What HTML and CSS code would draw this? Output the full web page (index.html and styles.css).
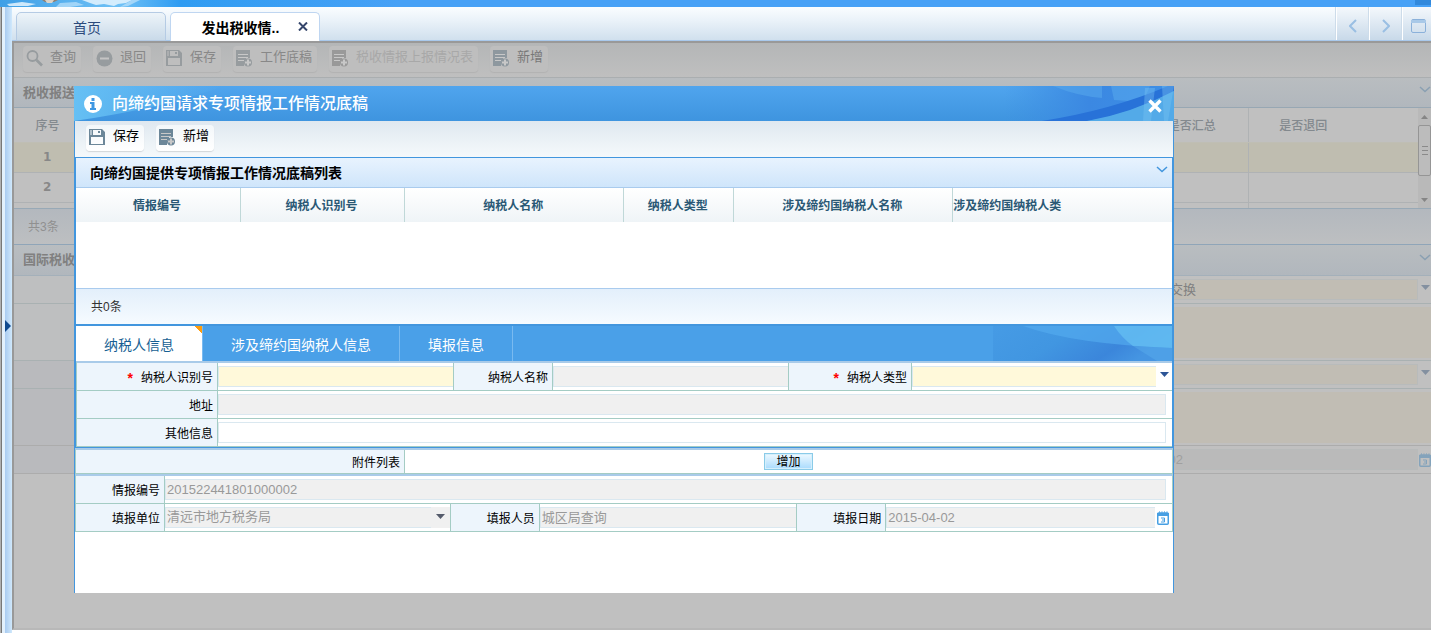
FILE: index.html
```html
<!DOCTYPE html>
<html lang="zh-CN">
<head>
<meta charset="utf-8">
<title>发出税收情报</title>
<link rel="stylesheet" href="styles.css">
</head>
<body>
<svg class="defs" aria-hidden="true">
  <symbol id="i-save" viewBox="0 0 17 17"><path fill="currentColor" fill-rule="evenodd" d="M0 0h13l3 3v13H0zM4 1v5h8V1zM2 8v7h12V8zM1 1v5h2V1z"/><path fill="currentColor" d="M9 2h2v2H9z"/><path fill="currentColor" opacity=".5" d="M1 1h2v5H1z"/></symbol>
  <symbol id="i-add" viewBox="0 0 17 17"><path fill="currentColor" d="M0 0h14v8h-4v3H8v5H0z"/><path class="lines" d="M2 4.500h10M2 7.500h10M2 10.500h6" stroke-width="1"/><circle cx="12" cy="12.500" r="4" fill="currentColor"/><path class="lines" d="M12 9.500v6M9 12.500h6" stroke-width="2"/></symbol>
  <symbol id="i-find" viewBox="0 0 17 17"><circle cx="6.500" cy="6" r="5" fill="none" stroke="currentColor" stroke-width="1.800"/><path d="M10.500 10l5.500 5.500" stroke="currentColor" stroke-width="2.600"/></symbol>
  <symbol id="i-back" viewBox="0 0 17 17"><circle cx="8.500" cy="8.500" r="8" fill="currentColor"/><path d="M4 8.500h9" stroke="#c4c4c4" stroke-width="2"/></symbol>
  <symbol id="i-down" viewBox="0 0 12 7"><path d="M1 1l5 4.500L11 1" fill="none" stroke="currentColor" stroke-width="1.500"/></symbol>
  <symbol id="i-tri" viewBox="0 0 9 5"><path d="M0 0h9L4.500 5z" fill="currentColor"/></symbol>
  <symbol id="i-cal" viewBox="0 0 12 14"><rect x=".75" y="2" width="10.500" height="11.250" rx="1" fill="none" stroke="currentColor" stroke-width="1.500"/><path d="M0 2h12v3H0z" fill="currentColor"/><path d="M2.500 0v3M5 0v3M7.500 0v3M10 0v3" stroke="currentColor" opacity=".6"/><path d="M4 7h3.500v4H4M5 9h2.500" fill="none" stroke="currentColor"/></symbol>
</svg>
<div class="page">
  <header class="banner">
    <svg width="400" height="7" viewBox="0 0 400 7" aria-hidden="true">
      <defs><linearGradient id="g0"><stop offset="0" stop-color="#3f9fe6"/><stop offset=".3" stop-color="#6fc1f6"/><stop offset=".45" stop-color="#2f9cf2"/><stop offset="1" stop-color="#47a1f6"/></linearGradient></defs>
      <path fill="url(#g0)" d="M0 0h400v7H0z"/>
      <path fill="#e6f5fe" opacity=".85" d="M82 0h50l-6 3-8 1-4 2-10-2-8 1-6-2zM7 4l15-2 14 2-8 2H9z"/>
      <path fill="#bfe3fb" opacity=".7" d="M60 3l16-1 8 3-14 2H56zM132 0h8l-12 6-8 1z"/>
      <path fill="#8f7f72" d="M42 0h16l-4 2h-9z"/><path fill="#d9d2c8" d="M45 0h9l-2 3h-5z"/>
    </svg>
    <i class="corner"></i>
  </header>
  <div class="shell">
    <aside class="rail"><button class="expand" aria-label="展开菜单"><svg width="6" height="12" viewBox="0 0 6 12"><path d="M0 0l6 6-6 6z" fill="#104a8f"/></svg></button></aside>
    <main class="main">
      <nav class="tabs">
        <button class="tab">首页</button>
        <div class="tab on"><button class="name">发出税收情..</button><button class="x" aria-label="关闭标签"><svg width="10" height="9" viewBox="0 0 10 9"><path d="M1 .5l8 8M9 .5l-8 8" stroke="#35466b" stroke-width="2"/></svg></button></div>
        <div class="ctrl">
          <button aria-label="上一个"><svg width="8" height="14" viewBox="0 0 8 14"><path d="M7 1L1 7l6 6" fill="none" stroke="#9abfe3" stroke-width="2"/></svg></button>
          <button aria-label="下一个"><svg width="8" height="14" viewBox="0 0 8 14"><path d="M1 1l6 6-6 6" fill="none" stroke="#9abfe3" stroke-width="2"/></svg></button>
          <button aria-label="最大化"><svg width="15" height="14" viewBox="0 0 15 14"><rect x=".5" y=".5" width="14" height="13" rx="1.500" fill="none" stroke="#8bb1da"/><path d="M0 1h15v3H0z" fill="#a9c9e8"/></svg></button>
        </div>
      </nav>
      <section class="work">
        <div class="toolbar">
          <button class="btn"><svg><use href="#i-find"/></svg>查询</button>
          <button class="btn"><svg><use href="#i-back"/></svg>退回</button>
          <button class="btn"><svg><use href="#i-save"/></svg>保存</button>
          <button class="btn"><svg><use href="#i-add"/></svg>工作底稿</button>
          <button class="btn off" disabled><svg><use href="#i-add"/></svg>税收情报上报情况表</button>
          <button class="btn dark"><svg><use href="#i-add"/></svg>新增</button>
        </div>
        <h2 class="bar">税收报送<svg class="chev"><use href="#i-down"/></svg></h2>
        <div class="list">
          <table class="rows">
            <colgroup><col class="c-no"><col><col class="c-sum"><col class="c-ret"></colgroup>
            <thead><tr><th>序号</th><th></th><th>是否汇总</th><th class="ret">是否退回</th></tr></thead>
            <tbody>
              <tr class="sel"><td>1</td><td></td><td></td><td></td></tr>
              <tr><td>2</td><td></td><td></td><td></td></tr>
              <tr class="cut"><td></td><td></td><td></td><td></td></tr>
            </tbody>
          </table>
          <div class="scroll"><svg width="7" height="4"><path d="M0 4l3.500-4L7 4z" fill="#858585"/></svg><span class="thumb"></span><svg width="7" height="4"><path d="M0 0l3.500 4L7 0z" fill="#858585"/></svg></div>
        </div>
        <div class="count">共3条</div>
        <h2 class="bar second">国际税收<svg class="chev"><use href="#i-down"/></svg></h2>
        <div class="bform">
          <div class="brow"><span class="bl"></span><input aria-label="交换类型" value="情报交换" readonly><svg class="tri"><use href="#i-tri"/></svg></div>
          <div class="brow tall"><span class="bl"></span><textarea aria-label="说明"></textarea></div>
          <div class="brow"><span class="bl shade"></span><input aria-label="类型"><svg class="tri"><use href="#i-tri"/></svg></div>
          <div class="brow tall"><span class="bl shade"></span><textarea aria-label="备注"></textarea></div>
          <div class="brow"><span class="bl shade"></span><input class="plain" aria-label="日期" value="2015-04-02" readonly><svg class="cal"><use href="#i-cal"/></svg></div>
        </div>
      </section>
    </main>
  </div>

  <div class="dialog" role="dialog" aria-labelledby="dlg">
    <div class="title">
      <svg class="glow" width="150" height="35" viewBox="0 0 150 35" aria-hidden="true"><defs><linearGradient id="g3"><stop offset="0" stop-color="#66c0f4"/><stop offset="1" stop-color="#66c0f4" stop-opacity="0"/></linearGradient></defs><path fill="url(#g3)" d="M0 0h150Q90 22 0 35z"/></svg>
      <svg class="info" viewBox="0 0 18 18"><circle cx="9" cy="9" r="9" fill="#fff"/><path fill="#3f97e2" d="M7.500 3h3v3h-3zM6 7h4.500v6H12v2H6v-2h1.500V9H6z"/></svg>
      <h1 id="dlg">向缔约国请求专项情报工作情况底稿</h1>
      <svg class="deco" width="170" height="35" viewBox="0 0 170 35" aria-hidden="true">
        <defs><linearGradient id="g1"><stop offset="0" stop-color="#3c8de2" stop-opacity="0"/><stop offset=".5" stop-color="#3b88e2"/><stop offset="1" stop-color="#3d8fe6"/></linearGradient></defs>
        <path fill="url(#g1)" d="M0 0h170v35H0z"/>
        <path fill="#5aacee" opacity=".5" d="M49 0h49v12q-25-2-49-12zM107 0h39l-7 16-29-2z"/>
        <path fill="#2872d8" d="M38 35Q108 24 164 0h6v5Q125 29 83 35z"/>
        <path fill="#53aae8" d="M83 35Q128 27 170 5v30z"/>
        <path fill="#79c4f2" opacity=".4" d="M141 2h10l-4 33h-8zM158 0h12l-6 35h-4z"/>
      </svg>
      <button class="close" aria-label="关闭"><svg width="14" height="14" viewBox="0 0 14 14"><path d="M1.500 1.500l11 11M12.500 1.500l-11 11" stroke="#fff" stroke-width="3.400"/></svg></button>
    </div>
    <div class="toolbar bright">
      <button class="btn"><svg><use href="#i-save"/></svg>保存</button>
      <button class="btn"><svg><use href="#i-add"/></svg>新增</button>
    </div>
    <div class="panel">
      <h2 class="phead">向缔约国提供专项情报工作情况底稿列表<svg class="chev"><use href="#i-down"/></svg></h2>
      <div class="empty">
        <table class="cols">
          <colgroup><col class="w15"><col class="w15"><col class="w20"><col class="w10"><col class="w20"><col></colgroup>
          <thead><tr><th>情报编号</th><th>纳税人识别号</th><th>纳税人名称</th><th>纳税人类型</th><th>涉及缔约国纳税人名称</th><th class="last">涉及缔约国纳税人类</th></tr></thead>
        </table>
      </div>
      <div class="pcount">共0条</div>
      <div class="ptabs" role="tablist">
        <button role="tab" aria-selected="true" class="ptab on">纳税人信息</button>
        <button role="tab" class="ptab">涉及缔约国纳税人信息</button>
        <button role="tab" class="ptab">填报信息</button>
        <svg class="deco" width="179" height="35" viewBox="0 0 179 35" aria-hidden="true">
          <defs><linearGradient id="g2" x2="1" y2=".3"><stop offset="0" stop-color="#469be5"/><stop offset=".45" stop-color="#4196e1"/><stop offset=".8" stop-color="#3b86db"/><stop offset="1" stop-color="#4595e2"/></linearGradient></defs>
          <path fill="url(#g2)" d="M0 0h179v35H0z"/>
          <path fill="#52a9ee" opacity=".7" d="M30 0h149v22Q80 18 30 0z"/>
          <path fill="#66c0f2" opacity=".7" d="M121 0h58v22l-39-2Q129 12 121 0z"/><path fill="#58acec" opacity=".5" d="M140 20l39 2v13h-15z"/>
        </svg>
      </div>
      <form class="form f1">
        <label for="a1"><b class="req">*</b>纳税人识别号</label><div class="cell"><input id="a1" class="must"></div>
        <label for="a2">纳税人名称</label><div class="cell"><input id="a2" readonly></div>
        <label for="a3"><b class="req">*</b>纳税人类型</label><div class="cell end"><select id="a3" class="must"><option></option></select><svg class="tri navy"><use href="#i-tri"/></svg></div>
        <label for="a4">地址</label><div class="cell wide"><input id="a4" readonly></div>
        <label for="a5">其他信息</label><div class="cell wide"><input id="a5"></div>
      </form>
    </div>
    <div class="attach"><span class="alabel">附件列表</span><div class="abody"><button class="addbtn">增加</button></div></div>
    <form class="form f2">
      <label for="b1">情报编号</label><div class="cell wide"><input id="b1" value="201522441801000002" readonly></div>
      <label for="b2">填报单位</label><div class="cell unit"><select id="b2"><option>清远市地方税务局</option></select><svg class="tri"><use href="#i-tri"/></svg></div>
      <label for="b3">填报人员</label><div class="cell"><input id="b3" class="zh" value="城区局查询" readonly></div>
      <label for="b4">填报日期</label><div class="cell end"><input id="b4" value="2015-04-02" readonly><svg class="cal"><use href="#i-cal"/></svg></div>
    </form>
  </div>
</div>
</body>
</html>
```

FILE: styles.css
```css
* { box-sizing: border-box; }
body, h1, h2 { margin: 0; }
body, button, input, select, textarea {
  font-family: "Liberation Sans", "Noto Sans CJK SC", sans-serif;
  font-size: 12px;
}
button { border: 0; padding: 0; background: none; color: inherit; }
svg { display: block; flex: none; }
.defs { position: absolute; width: 0; height: 0; }

.page { position: relative; display: flex; flex-direction: column; height: 100vh; overflow: hidden; background: #fff; }
.banner { display: flex; justify-content: space-between; height: 7px; background: #47a1f6; }
.corner { width: 16px; height: 5px; background: #3289dc; }
.shell { flex: 1; display: flex; min-height: 0; }
.rail {
  display: flex; align-items: center; width: 12px; padding-left: 5px;
  background: linear-gradient(90deg, #b0b0b0 1px, #777 1px, #777 2px, #e2f0fc 2px, #e2f0fc 5px, #a9cbf0 5px, #c4dff8 10px, #d0e9fc);
}
.expand { padding-top: 12px; }
.main { flex: 1; display: flex; flex-direction: column; min-width: 0; padding-bottom: 3px; }

.tabs {
  display: flex; align-items: flex-end; gap: 4px; height: 36px; padding-left: 4px;
  background: linear-gradient(#fafdff, #eaf2f9 40%, #cfdfed);
  border-bottom: 2px solid #999; box-shadow: inset 0 -1px #a9c9ec;
}
.tab {
  display: flex; align-items: center; justify-content: center;
  width: 150px; height: 29px; border: 1px solid #b5cbe4; border-radius: 5px 5px 0 0;
  background: linear-gradient(#edf4f9, #c9dae9); color: #2c4a7c; font-size: 14px;
}
button.tab { padding-right: 8px; }
.tab.on { background: #fff; border-color: #bfd6f1; border-bottom: 0; gap: 19px; padding-left: 20px; }
.x { padding-bottom: 2px; }
.name { font-size: 14px; font-weight: bold; color: #000; }
.ctrl { display: flex; align-self: stretch; margin-left: auto; }
.ctrl button {
  display: flex; align-items: center; justify-content: center; width: 33px; height: 33px; padding-top: 4px;
  border-left: 1px solid #fff; box-shadow: -1px 0 #cddcea; background: linear-gradient(#f4f8fc, #c8d9e9);
}
.ctrl button:last-child { width: 29px; padding-left: 3px; }

.work { flex: 1; background: #c0c0c0; border-left: 2px solid #999; border-bottom: 2px solid #b8b8b8; color: #888; }
.toolbar { display: flex; gap: 12px; height: 35px; padding: 3px 9px; border-bottom: 1px solid #aaaeb0; background: linear-gradient(#b4b6b7, #bfbfbf); }
.btn {
  display: flex; align-items: center; gap: 7px; height: 26px; padding: 0 5px 4px 3px;
  border-radius: 4px; font-size: 13px; line-height: 18px; background: #bebebe; box-shadow: 0 1px 1px #b2b2b2; color: #888;
}
.btn svg { width: 17px; height: 17px; margin-top: 2px; color: #979c9f; }
.btn.off { color: #a8a8a8; }
.btn.off svg { color: #999; }
.btn.dark { color: #787878; }
.btn.dark svg { color: #8e989f; }
.lines { stroke: #c8c8c8; }
.bar {
  display: flex; align-items: center; justify-content: space-between; height: 30px; padding: 0 0 3px 9px;
  font-size: 13px; color: #808080; background: linear-gradient(#b9bdc0, #b1b7bd); border-bottom: 1px solid #97a7b3;
}
.chev { width: 12px; height: 7px; }
.bar .chev { color: #8aa0b2; margin-bottom: 3px; }
.list { display: flex; height: 101px; border-bottom: 1px solid #98a9b6; }
.rows { flex: 1; table-layout: fixed; border-collapse: collapse; }
.rows th, .rows td { padding: 0; border-bottom: 1px solid #afb2b4; text-align: center; }
.rows th { height: 34px; font-weight: 500; color: #83898e; border-bottom-color: #bfbeb4; }
.rows td { height: 30px; font-weight: bold; font-family: "DejaVu Sans", sans-serif; }
.rows td + td, .rows .ret { border-left: 1px solid #afb2b4; }
.rows .cut td { height: 6px; border-bottom: 0; }
.rows .ret { padding-right: 60px; }
.sel { background: #bfbdb0; }
.c-no { width: 67px; }
.c-sum { width: 112px; }
.c-ret { width: 170px; }
.scroll { display: flex; flex-direction: column; align-items: center; justify-content: space-between; width: 13px; padding: 7px 0 6px; background: #b9b9b9; }
.thumb {
  width: 13px; height: 51px; margin-bottom: 16px; border: 1px solid #959595; border-radius: 2px;
  background: linear-gradient(#8a8a8a, #8a8a8a) center 20px / 6px 1px no-repeat, linear-gradient(#8a8a8a, #8a8a8a) center 24px / 6px 1px no-repeat, linear-gradient(#8a8a8a, #8a8a8a) center 28px / 6px 1px no-repeat, #bcbcbc;
}
.count { display: flex; align-items: center; height: 36px; padding: 0 0 2px 14px; background: linear-gradient(#b3b8be, #bdbfc1); border-bottom: 1px solid #8fa5b8; color: #909090; }
.bar.second { height: 31px; border-color: #a4b0ba; }
.brow { display: grid; grid-template-columns: 60px 1fr 13px; align-items: center; height: 28px; border-bottom: 1px solid #a9b1b2; }
.brow.tall { height: 57px; }
.brow.tall:nth-child(4), .brow:nth-child(5) { border-color: #acacac; }
.bl { align-self: stretch; background: #bebfc0; }
.bl.shade { background: #b9babd; }
.brow input, .brow textarea {
  width: 100%; min-width: 0; height: 21px; border: 1px solid #b8bbbb; background: #c1bdb4; color: #808080;
  font-size: 13px; padding: 0 221px 3px 0; text-align: right; outline: 0; resize: none;
}
.brow textarea { height: 51px; border: 0; grid-column: 2 / 4; }
.brow .plain { background: #bababa; color: #a0a0a0; padding: 0 234px 0 0; }
.tri { width: 9px; height: 5px; color: #8390a0; }
.brow .tri { margin: 0 0 4px 3px; }
.cal { width: 12px; height: 14px; color: #479fe3; }
.brow .cal { color: #84a3bb; margin-left: 1px; }

.dialog {
  position: absolute; top: 86px; left: 74px; right: 257px; bottom: 40px;
  display: flex; flex-direction: column; background: #fff; border: 1px solid #4296de; border-top: 0; border-bottom: 0; color: #000;
}
.title {
  position: relative; flex: none; display: flex; align-items: center; gap: 10px; height: 35px; padding: 0 12px 0 10px; margin: 0 -1px;
  background: linear-gradient(#50a5ee, #3e94df);
}
.glow { position: absolute; left: 0; top: 0; }
.title h1 { position: relative; flex: 1; font-size: 16px; font-weight: 500; line-height: 35px; color: #fff; }
.info { position: relative; width: 18px; height: 18px; }
.deco { position: absolute; right: 0; top: 0; }
.close { position: relative; margin-top: 4px; }
.bright { flex: none; height: 36px; padding: 4px 11px; border-bottom: 0; background: linear-gradient(#dfe8f0, #f5f9fb); }
.bright .btn { color: #000; background: linear-gradient(#f3f7fa, #fff); box-shadow: 0 1px 1px #d2d6d9; }
.bright .btn svg { color: #6c8799; }
.bright .lines { stroke: #fff; }
.panel { flex: none; border: 1px solid #4296de; }
.phead {
  display: flex; align-items: center; justify-content: space-between; height: 30px; padding: 0 4px 2px 14px;
  font-size: 14px; background: linear-gradient(#e8f3fe, #cfe5fb); border-bottom: 1px solid #a9cbee;
}
.phead .chev { color: #4296de; margin-bottom: 4px; }
.empty { height: 100px; }
.cols { width: 100%; table-layout: fixed; border-collapse: collapse; background: linear-gradient(#fff, #eff4f7); }
.cols th { height: 34px; padding: 0 2px 2px 0; border-right: 1px solid #c0d8d8; color: #2a5875; font-weight: bold; white-space: nowrap; }
.cols .last { border: 0; text-align: left; }
.w15 { width: 15%; }
.w20 { width: 20%; }
.w10 { width: 10%; }
.pcount { display: flex; align-items: center; height: 36px; padding: 0 0 2px 15px; color: #333; border-top: 1px solid #a9cbee; background: linear-gradient(#e3effb, #f6fbff); }
.ptabs { position: relative; display: flex; height: 37px; border-top: 2px solid #4296de; background: #4aa0e8; }
.ptab { padding: 0 28px; font-size: 14px; color: #fff; border-right: 1px solid #79baf0; }
.ptab.on { color: #175f93; background: linear-gradient(225deg, #ff9c0c 5px, #fff 5px); }

.form { display: grid; flex: none; border-top: 2px solid #a9cbe9; }
.f1 { grid-template-columns: 141px 236fr 99px 236fr 123px 260fr; border-left: 1px solid #a4ccc4; }
.f2 { grid-template-columns: 89px 286fr 89px 258fr 89px 286fr; border-left: 1px solid #a4ccc4; border-right: 1px solid #a4ccc4; }
.form label, .alabel {
  display: flex; align-items: center; justify-content: flex-end; padding: 0 4px 1px 0;
  background: #edf5fc; border-right: 1px solid #a4ccc4; border-bottom: 1px solid #a4ccc4;
}
.form label { height: 28px; }
.req { margin-right: 8px; padding-top: 4px; font-size: 14px; line-height: 14px; color: #f00; }
.cell { display: flex; align-items: center; min-width: 0; border-right: 1px solid #a4ccc4; border-bottom: 1px solid #a4ccc4; }
.cell input, .cell select {
  flex: 1; width: 100%; min-width: 0; height: 21px; padding: 0 1px; border: 1px solid #dae8f0; border-right: 0; border-radius: 0;
  appearance: none; background: #fff; color: #999; font-size: 13px; outline: 0;
}
.cell input:read-only, .cell select { background: #f0f0f0; }
.cell select, .cell .zh { padding-bottom: 3px; }
.cell .must { background: #fff9da; }
.wide { grid-column: 2 / 7; padding-right: 6px; }
.cell.wide input { border-right: 1px solid #dae8f0; }
.wide, .end { border-right: 0; }
.end { gap: 4px; padding-right: 3px; }
.end .cal { margin-left: -2px; }
.navy { color: #2d5596; margin-bottom: 4px; }
.unit .tri { width: 19px; height: 21px; padding: 7px 5px 9px; background: #f0f0f0; color: #555b6b; }
.attach { display: grid; flex: none; grid-template-columns: 329px 1fr; height: 26px; border: 1px solid #a4ccc4; border-top: 2px solid #a9cbe9; }
.alabel { border-bottom: 0; }
.abody { display: flex; align-items: center; justify-content: center; }
.addbtn { width: 49px; height: 17px; border: 1px solid #8acbe8; background: linear-gradient(#eef9ff, #a9dbfd); box-shadow: inset 0 0 0 1px #d5effc; line-height: 14px; }
```
